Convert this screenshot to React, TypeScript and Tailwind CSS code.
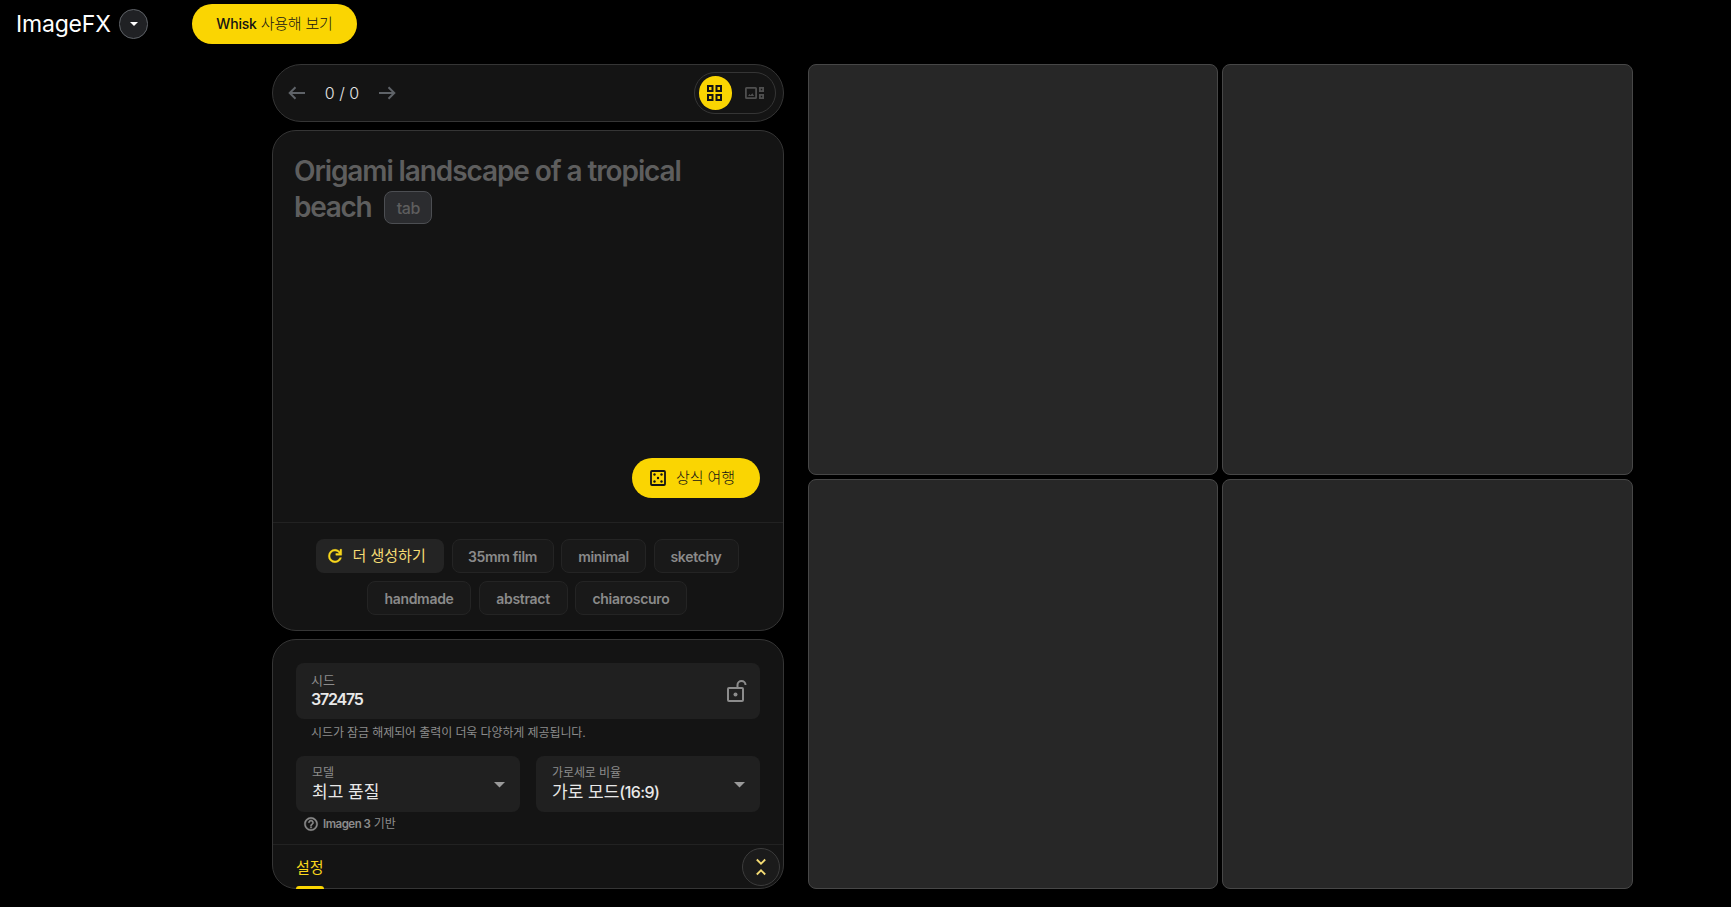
import React from 'react';

const BASE_FONT = "font-['Inter','Noto_Sans_CJK_KR',sans-serif]";

const ArrowIcon = ({ flip = false }: { flip?: boolean }) => (
  <svg width="17" height="18" viewBox="0 0 17 18" fill="none" stroke="#5f6368" strokeWidth="2" className={flip ? '-scale-x-100' : ''}>
    <path d="M17 9H2M7.500 3.200L1.700 9l5.800 5.800" />
  </svg>
);

const GridIcon = () => (
  <svg width="15" height="16" viewBox="0 0 15 16" fill="none" stroke="#141414" strokeWidth="2" className="mr-[2px]">
    <path d="M1 1h4.500v5H1zM9.500 1H14v5H9.500zM1 10h4.500v5H1zM9.500 10H14v5H9.500z" />
  </svg>
);

const FilmstripIcon = () => (
  <svg width="19" height="12" viewBox="0 0 19 12" fill="none" stroke="#4f4f4f" strokeWidth="1.8">
    <rect x="0.9" y="0.9" width="10.2" height="10.2" rx="0.6" />
    <path d="M14.900 0.900h3.200v3.200h-3.200zM14.900 7.900h3.200v3.200h-3.200z" />
    <path d="M3 9l1.400-2 1.200 1.300L7.300 6.300 9.200 9z" fill="#4f4f4f" stroke="none" />
  </svg>
);

const DiceIcon = () => (
  <svg width="16" height="16" viewBox="0 0 16 16" fill="#141414">
    <rect x="1" y="1" width="14" height="14" rx="1" fill="none" stroke="#141414" strokeWidth="1.8" />
    <circle cx="4.5" cy="4.5" r="1.2" />
    <circle cx="11.5" cy="4.5" r="1.2" />
    <circle cx="8" cy="8" r="1.2" />
    <circle cx="4.5" cy="11.5" r="1.2" />
    <circle cx="11.5" cy="11.5" r="1.2" />
  </svg>
);

const RefreshIcon = () => (
  <svg width="20" height="20" viewBox="0 0 24 24" fill="#f9d71c" stroke="#f9d71c" strokeWidth="0.5">
    <path d="M12 20q-3.350 0-5.675-2.325T4 12t2.325-5.675T12 4q1.725 0 3.300.712T18 6.750V4h2v7h-7V9h4.200q-.8-1.400-2.188-2.200T12 6Q9.500 6 7.750 7.750T6 12t1.750 4.250T12 18q1.925 0 3.475-1.100T17.650 14h2.100q-.7 2.650-2.850 4.325T12 20" />
  </svg>
);

const UnlockIcon = () => (
  <svg width="20" height="22" viewBox="0 0 20 22" fill="none" stroke="#8c8c8c" strokeWidth="2">
    <rect x="1" y="8" width="15" height="13" rx="1" />
    <path d="M10.500 8V5a4 4 0 0 1 8 0" />
    <circle cx="8.5" cy="14.5" r="2" fill="#8c8c8c" stroke="none" />
  </svg>
);

const HelpIcon = () => (
  <svg width="16" height="16" viewBox="0 0 24 24" fill="#8c8c8c" stroke="#8c8c8c" strokeWidth="0.6">
    <path d="M11 18h2v-2h-2zm1-16C6.480 2 2 6.480 2 12s4.480 10 10 10 10-4.480 10-10S17.520 2 12 2m0 18c-4.410 0-8-3.590-8-8s3.590-8 8-8 8 3.590 8 8-3.590 8-8 8m0-14c-2.210 0-4 1.790-4 4h2c0-1.100.9-2 2-2s2 .9 2 2c0 2-3 1.750-3 5h2c0-2.250 3-2.500 3-5 0-2.210-1.790-4-4-4" />
  </svg>
);

const CollapseIcon = () => (
  <svg width="10" height="18" viewBox="0 0 10 18" fill="none" stroke="#f5dc74" strokeWidth="1.8">
    <path d="M0.800 1.500L5 5.700l4.200-4.200M0.800 16.500L5 12.300l4.200 4.200" />
  </svg>
);

const Caret = () => (
  <svg width="11" height="6" viewBox="0 0 11 6" fill="#9a9a9a" className="mt-px">
    <path d="M0 0h11L5.500 5.500z" />
  </svg>
);

const chipRows = [
  [
    { label: '35mm film', width: 'w-[102px]' },
    { label: 'minimal', width: 'w-[85px]' },
    { label: 'sketchy', width: 'w-[85px]' },
  ],
  [
    { label: 'handmade', width: 'w-[104px]' },
    { label: 'abstract', width: 'w-[89px]' },
    { label: 'chiaroscuro', width: 'w-[112px]' },
  ],
];

const Chip = ({ label, width }: { label: string; width: string }) => (
  <button className={`${width} h-[34px] rounded-lg border border-[#242424] bg-[#191919] text-[14px] font-semibold tracking-[-0.3px] text-[#8a8a8a] whitespace-nowrap`}>
    {label}
  </button>
);

const SelectField = ({ label, children }: { label: string; children: React.ReactNode }) => (
  <div className="flex h-14 w-56 items-center justify-between rounded-lg bg-[#202020] pr-[15px] pl-4">
    <div className="flex flex-col">
      <span className="text-[12px] leading-4 tracking-[-0.1px] text-[#8c8c8c]">{label}</span>
      <span className="text-[17px] leading-[22px] text-[#e8e8e8]">{children}</span>
    </div>
    <Caret />
  </div>
);

const Header = () => (
  <header className="flex h-12 items-start pl-4">
    <h1 className="mt-[8px] w-[103px] text-[23px] leading-8 tracking-[-0.2px] whitespace-nowrap text-white">ImageFX</h1>
    <button className="mt-[9px] flex h-[30px] w-[29px] items-center justify-center rounded-full border border-[#5f6368] bg-[#202124]">
      <svg width="8" height="4" viewBox="0 0 8 4" fill="#fff"><path d="M0 0h8L4 4z" /></svg>
    </button>
    <button className="mt-1 ml-11 h-10 w-[165px] rounded-full bg-[#fad502] text-[14px] whitespace-nowrap text-[#141414]">
      <span className="font-medium tracking-[-0.2px]">Whisk</span> <span className="text-[15px] font-light tracking-[-0.2px]">사용해 보기</span>
    </button>
  </header>
);

const Toolbar = () => (
  <div className="flex h-[58px] items-center justify-between rounded-[29px] border border-[#353535] bg-[#141414] pr-[7px] pl-[15px]">
    <div className="flex items-center">
      <ArrowIcon />
      <span className="w-[74px] text-center text-[16px] leading-6 font-light text-[#e4e4e4]">0 / 0</span>
      <ArrowIcon flip />
    </div>
    <div className="flex h-[42px] w-[82px] items-center rounded-full border border-[#353535] pl-1">
      <span className="flex h-[34px] w-[33px] items-center justify-center rounded-full bg-[#fad502]">
        <GridIcon />
      </span>
      <span className="ml-[13px]"><FilmstripIcon /></span>
    </div>
  </div>
);

const PromptCard = () => (
  <section className="flex h-[501px] flex-col rounded-3xl border border-[#353535] bg-[#141414]">
    <div className="flex h-[392px] flex-col justify-between border-b border-[#222222] pt-[22px] pr-[23px] pb-6 pl-[21px]">
      <div className="text-[28px] leading-9 font-semibold tracking-[-1.1px] whitespace-nowrap text-[#5e5e5e]">
        <p>Origami landscape of a tropical</p>
        <p className="flex items-center tracking-[-1.3px]">
          beach
          <kbd className="mt-px ml-[13px] flex h-[33px] w-12 items-center justify-center rounded-lg border border-[#4c4e52] bg-[#2b2c2f] font-['Inter',sans-serif] text-[16px] font-medium tracking-[-0.4px] text-[#5e5e5e]">tab</kbd>
        </p>
      </div>
      <button className="flex h-10 w-32 items-center self-end rounded-full bg-[#fad502] pl-[18px] text-[15px] font-light tracking-[-0.1px] text-[#141414]">
        <DiceIcon />
        <span className="ml-[10px]">상식 여행</span>
      </button>
    </div>
    <div className="flex flex-col items-center gap-2 pt-4 pr-[2px]">
      <div className="flex">
        <button className="mr-2 flex h-[34px] w-32 items-center rounded-lg bg-[#242424] pl-[9px] text-[15px] text-[#f5dc74]">
          <RefreshIcon />
          <span className="ml-2">더 생성하기</span>
        </button>
        <div className="flex gap-[7.5px]">
          {chipRows[0].map(chip => <Chip key={chip.label} {...chip} />)}
        </div>
      </div>
      <div className="flex gap-[7.5px]">
        {chipRows[1].map(chip => <Chip key={chip.label} {...chip} />)}
      </div>
    </div>
  </section>
);

const SettingsCard = () => (
  <section className="flex h-[250px] flex-col rounded-3xl border border-[#353535] bg-[#141414]">
    <div className="flex h-[205px] flex-col border-b border-[#222222] px-[23px] pt-[23px]">
      <div className="flex h-14 shrink-0 items-center justify-between rounded-lg bg-[#202020] pr-[13px] pl-[15px]">
        <div className="flex flex-col">
          <span className="text-[13px] leading-4 text-[#8c8c8c]">시드</span>
          <span className="text-[16px] leading-[22px] font-semibold tracking-[-1.2px] text-[#e8e8e8]">372475</span>
        </div>
        <UnlockIcon />
      </div>
      <p className="mt-[6px] pl-[15px] text-[12px] leading-4 tracking-[-0.1px] text-[#8c8c8c]">시드가 잠금 해제되어 출력이 더욱 다양하게 제공됩니다.</p>
      <div className="mt-[15px] flex gap-4">
        <SelectField label="모델">최고 품질</SelectField>
        <SelectField label="가로세로 비율">
          가로 모드<span className="text-[16px] font-medium tracking-[-0.6px]">(16:9)</span>
        </SelectField>
      </div>
      <div className="mt-1 flex items-center pl-[7px] text-[12px] leading-4 text-[#8c8c8c]">
        <HelpIcon />
        <span className="ml-1"><span className="text-[11.5px] font-semibold tracking-[-0.5px]">Imagen 3</span> 기반</span>
      </div>
    </div>
    <div className="-mb-px flex h-11 justify-between pr-[3px] pl-[23px]">
      <div className="flex w-7 flex-col justify-between">
        <span className="pt-[13px] text-[15px] leading-5 tracking-[-0.1px] whitespace-nowrap text-[#f9d71c]">설정</span>
        <span className="h-[3px] rounded-t-sm bg-[#fad502]" />
      </div>
      <button className="mt-[3px] flex size-[38px] items-center justify-center rounded-full border border-[#3c3c3c] bg-[#1b1b1b]">
        <CollapseIcon />
      </button>
    </div>
  </section>
);

const App: React.FC = () => (
  <div className={`${BASE_FONT} h-[907px] w-[1731px] overflow-hidden bg-black`}>
    <Header />
    <main className="mt-4 flex gap-6 pl-[272px]">
      <div className="flex w-[512px] flex-col gap-2">
        <Toolbar />
        <PromptCard />
        <SettingsCard />
      </div>
      <div className="grid grid-cols-[410px_411px] grid-rows-[411px_410px] gap-1">
        {[0, 1, 2, 3].map(i => (
          <div key={i} className="rounded-lg border border-[#474747] bg-[#272727]" />
        ))}
      </div>
    </main>
  </div>
);

export default App;
